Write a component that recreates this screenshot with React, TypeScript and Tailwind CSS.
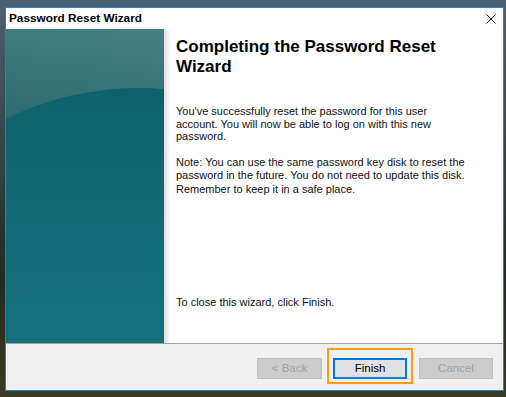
import { useState } from "react";

const uiFont = { fontFamily: '"Liberation Sans", Arial, sans-serif' };

function SidePanel() {
  return (
    <svg width="158" height="314" viewBox="0 0 158 314" className="block">
      <defs>
        <linearGradient id="lower" x1="0" y1="0" x2="0" y2="1">
          <stop offset="0" stopColor="#0d5c65" />
          <stop offset="0.35" stopColor="#10666f" />
          <stop offset="1" stopColor="#14717d" />
        </linearGradient>
        <linearGradient id="upper" x1="0" y1="0" x2="0.3" y2="1">
          <stop offset="0" stopColor="#3f7d7e" />
          <stop offset="1" stopColor="#2a6a6f" />
        </linearGradient>
        <linearGradient id="sheen" x1="0" y1="0" x2="1" y2="0">
          <stop offset="0" stopColor="#ffffff" stopOpacity="0" />
          <stop offset="1" stopColor="#ffffff" stopOpacity="0.06" />
        </linearGradient>
      </defs>
      <rect width="158" height="314" fill="url(#lower)" />
      <path d="M0 0 H158 V60 C128 57 62 58 0 90 Z" fill="url(#upper)" />
      <path d="M0 0 H158 V60 C128 57 62 58 0 90 Z" fill="url(#sheen)" />
    </svg>
  );
}

function CloseIcon() {
  return (
    <svg width="10" height="10" viewBox="0 0 10 10" className="block">
      <path d="M0.5 0.5 L9.5 9.5 M9.5 0.5 L0.5 9.5" stroke="#111" strokeWidth="1" />
    </svg>
  );
}

export default function App() {
  const [done, setDone] = useState(false);

  return (
    <div
      className="relative w-[506px] h-[397px] overflow-hidden bg-[linear-gradient(180deg,#4c6172_0%,#3a4a52_30%,#1e2a24_70%,#3a3a22_100%)] pt-[7px] pl-[5px]"
      style={uiFont}
    >
      {/* Window */}
      <div className="flex flex-col w-[499px] h-[384px] border border-[#1883d7] bg-white">
        {/* Title bar */}
        <div className="flex items-center justify-between h-[21px] pl-[3px] pr-[7px] bg-white">
          <span className="text-[11.8px] font-bold text-black leading-none">
            Password Reset Wizard
          </span>
          <CloseIcon />
        </div>

        {/* Body */}
        <div className="flex h-[314px]">
          <SidePanel />
          <div className="w-[6px] bg-[linear-gradient(90deg,#dcdcdc,#ffffff)]" />
          <div className="flex flex-col flex-1 pl-[6px] pt-[8px] pb-[34px] text-black">
            <h1 className="text-[17px] font-bold leading-[20px]">
              Completing the Password Reset
              <br />
              Wizard
            </h1>
            <p className="mt-[28px] text-[11px] leading-[12.6px] text-[#111]">
              You've successfully reset the password for this user
              <br />
              account. You will now be able to log on with this new
              <br />
              password.
            </p>
            <p className="mt-[13px] text-[11px] leading-[13.5px] text-[#111]">
              Note: You can use the same password key disk to reset the
              <br />
              password in the future. You do not need to update this disk.
              <br />
              Remember to keep it in a safe place.
            </p>
            <p className="mt-auto text-[11px] leading-[13px] text-[#111]">
              {done ? "Closing..." : "To close this wizard, click Finish."}
            </p>
          </div>
        </div>

        {/* Footer */}
        <div className="relative flex flex-1 items-start justify-end gap-[11px] border-t border-[#a0a0a0] bg-[#f0f0f0] pt-[14px] pr-[10px]">
          <button
            disabled
            className="w-[65px] h-[21px] border border-[#bfbfbf] bg-[#cccccc] text-[11.5px] text-[#a0a0a0] leading-none"
          >
            &lt; Back
          </button>
          <button
            onClick={() => setDone(true)}
            className="w-[74px] h-[21px] border-2 border-[#0078d7] bg-[#e1e1e1] text-[11.5px] text-black leading-none"
          >
            Finish
          </button>
          <button
            disabled
            className="ml-[1px] w-[74px] h-[21px] border border-[#bfbfbf] bg-[#cccccc] text-[11.5px] text-[#a0a0a0] leading-none"
          >
            Cancel
          </button>

          {/* highlight annotation */}
          <div className="pointer-events-none absolute left-[321px] top-[4px] w-[86px] h-[36px] border-2 border-[#f99c16]" />
        </div>
      </div>
    </div>
  );
}
